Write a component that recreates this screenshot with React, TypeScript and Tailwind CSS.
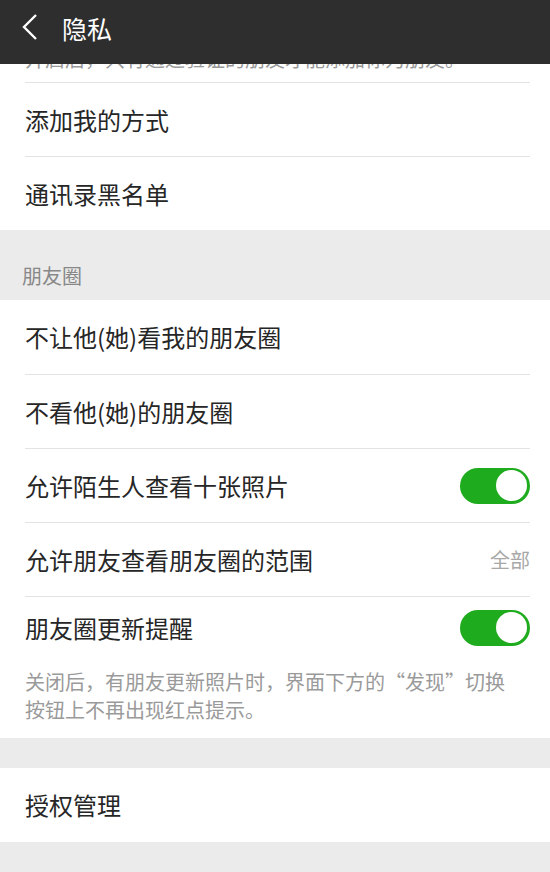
import React from "react";

const font = { fontFamily: '"Noto Sans CJK SC", "Noto Sans", sans-serif' };

function Toggle() {
  return (
    <div className="w-[70px] h-[36px] rounded-full bg-[#1fab1e] flex items-center justify-end pr-[3px]">
      <div className="w-[31px] h-[31px] rounded-full bg-white" />
    </div>
  );
}

function Row({ label, right, first }: { label: string; right?: React.ReactNode; first?: boolean }) {
  return (
    <div
      className={
        "ml-[25px] mr-[20px] h-[74px] flex items-center justify-between " +
        (first ? "" : "border-t border-[#e3e3e3]")
      }
    >
      <span className="text-[24px] leading-none text-[#262626]">{label}</span>
      {right}
    </div>
  );
}

export default function App() {
  return (
    <div className="w-[550px] h-[872px] overflow-hidden bg-[#ebebeb] flex flex-col" style={font}>
      <div className="h-[64px] bg-[#2e2e2e] flex items-center shrink-0">
        <svg width="20" height="30" viewBox="0 0 20 30" className="ml-[20px] mb-[8px]">
          <polyline points="16,2 4,14 16,26" fill="none" stroke="#ffffff" strokeWidth="2.4" />
        </svg>
        <span className="ml-[22px] mb-[8px] text-[25px] text-white leading-none">隐私</span>
      </div>

      <div className="bg-white">
        <div className="h-[18px] overflow-hidden flex flex-col justify-end">
          <p className="pl-[25px] pb-[9px] text-[20px] leading-[28px] text-[#999999] whitespace-nowrap shrink-0">
            开启后，只有通过验证的朋友才能添加你为朋友。
          </p>
        </div>
        <Row label="添加我的方式" />
        <Row label="通讯录黑名单" />
      </div>

      <div className="h-[70px] flex items-end pl-[22px] pb-[10px] shrink-0">
        <span className="text-[20px] leading-[28px] text-[#888888]">朋友圈</span>
      </div>

      <div className="bg-white">
        <Row label="不让他(她)看我的朋友圈" first />
        <Row label="不看他(她)的朋友圈" />
        <Row label="允许陌生人查看十张照片" right={<Toggle />} />
        <Row
          label="允许朋友查看朋友圈的范围"
          right={<span className="text-[20px] leading-none text-[#a8a8a8]">全部</span>}
        />
        <div className="ml-[25px] mr-[20px] h-[62px] flex items-center justify-between border-t border-[#e3e3e3]">
          <span className="text-[24px] leading-none text-[#262626]">朋友圈更新提醒</span>
          <Toggle />
        </div>
        <p className="pl-[25px] pr-[40px] pt-[10px] pb-[14px] text-[20px] leading-[28px] text-[#9a9a9a]">
          关闭后，有朋友更新照片时，界面下方的“发现”切换按钮上不再出现红点提示。
        </p>
      </div>

      <div className="h-[30px] shrink-0" />

      <div className="bg-white">
        <Row label="授权管理" first />
      </div>
    </div>
  );
}
